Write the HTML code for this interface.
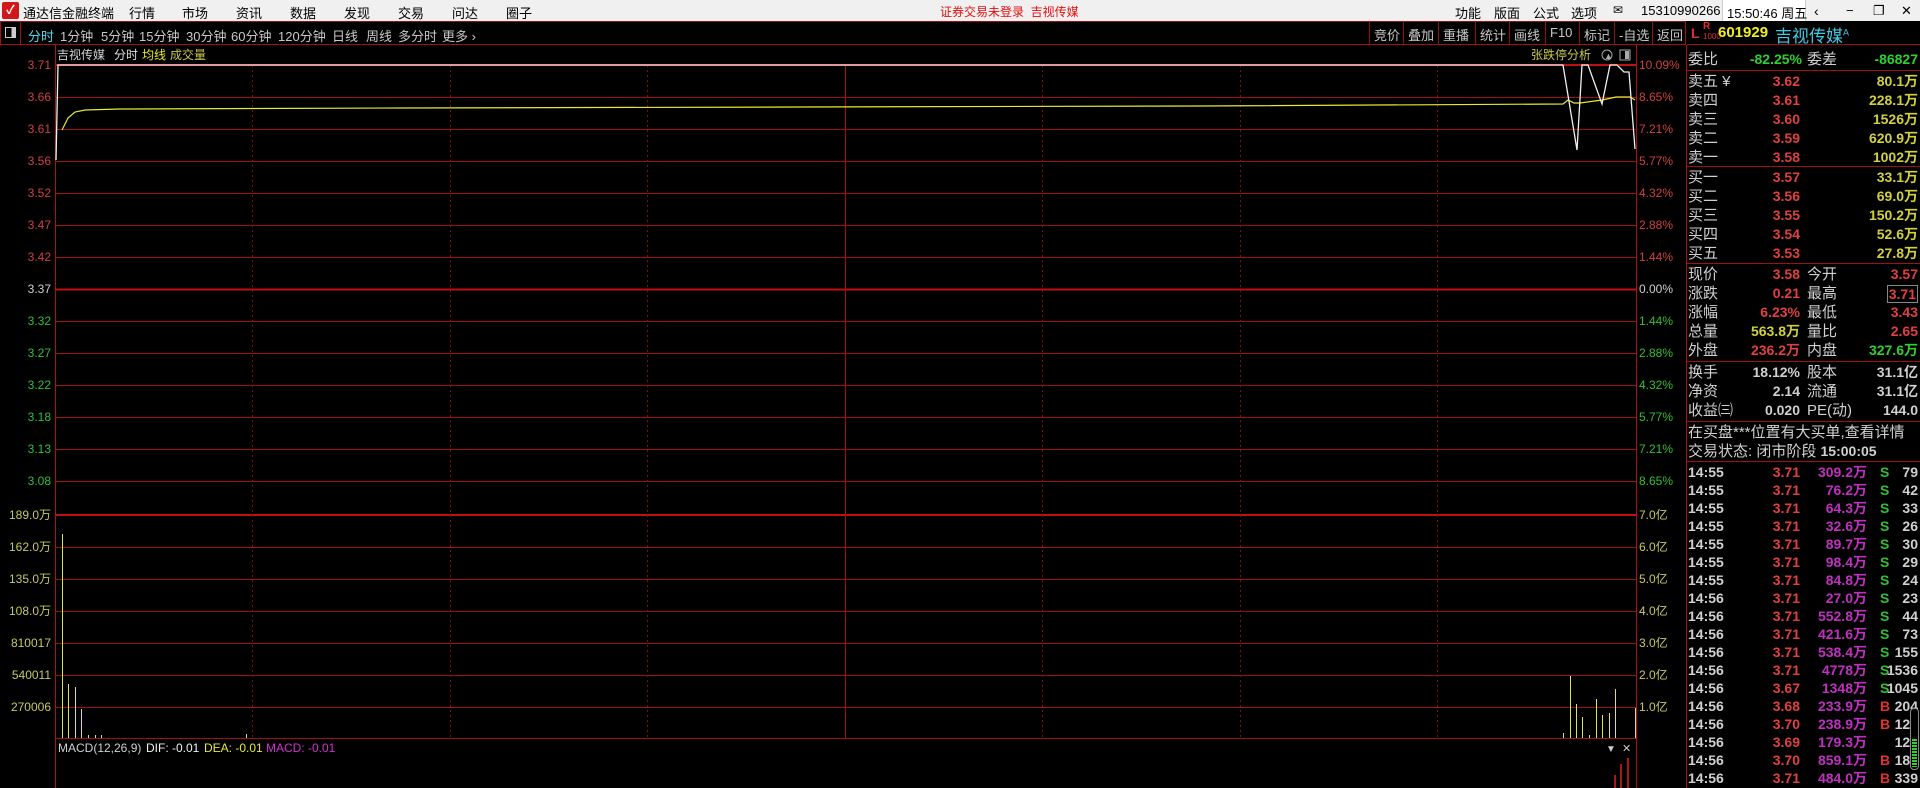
<!DOCTYPE html>
<html><head><meta charset="utf-8"><style>
*{margin:0;padding:0;box-sizing:border-box}
body{width:1920px;height:788px;background:#000;overflow:hidden;font-family:"Liberation Sans","Noto Sans CJK SC",sans-serif;position:relative}
.a{position:absolute;white-space:nowrap}
#title{position:absolute;left:0;top:0;width:1920px;height:21px;background:#f0f0f0;font-size:13px;color:#000}
#title .a{top:3px}
#tb{position:absolute;left:0;top:21px;width:1686px;height:24px;border:1px solid #a01010;background:#000;font-size:13px;color:#c8c8c8}
#tb .a{top:4px}
.btn{position:absolute;top:0;height:22px;border-left:1px solid #901010;padding:3px 4px 0;color:#c8c8c8;font-size:13px;white-space:nowrap}
.rp{position:absolute;left:1687px;width:233px;font-family:"Liberation Sans","Noto Sans CJK SC",sans-serif}
.row{position:absolute;left:0;width:233px;height:19px;font-size:15px;line-height:19px}
.row span{position:absolute;top:0;white-space:nowrap;line-height:19px}
.b{font-weight:bold;font-size:14px}
.hl{position:absolute;left:1687px;width:233px;height:1px;background:#a01010}
.tr{position:absolute;left:0;width:233px;height:18px;font-size:14px;font-weight:bold;line-height:18px}
.tr span{position:absolute;top:0;line-height:18px;white-space:nowrap}
</style></head><body>
<div id="title">
<div class="a" style="left:2px;top:2px;width:17px;height:17px;background:#d01818;border-radius:2px;color:#fff;font-size:12px;text-align:center;line-height:17px;font-weight:bold">✓</div>
<div class="a" style="left:23px">通达信金融终端</div>
<div class="a" style="left:129px">行情</div><div class="a" style="left:182px">市场</div><div class="a" style="left:236px">资讯</div><div class="a" style="left:290px">数据</div><div class="a" style="left:344px">发现</div><div class="a" style="left:398px">交易</div><div class="a" style="left:452px">问达</div><div class="a" style="left:506px">圈子</div>
<div class="a" style="left:940px;color:#e01010;font-size:12px">证券交易未登录&nbsp; 吉视传媒</div>
<div class="a" style="left:1455px">功能</div><div class="a" style="left:1494px">版面</div><div class="a" style="left:1533px">公式</div><div class="a" style="left:1571px">选项</div>
<div class="a" style="left:1613px;font-size:12px">✉</div>
<div class="a" style="left:1641px">15310990266</div>
<div class="a" style="left:1722px;top:0;height:21px;width:84px;background:#fff;border-left:1px solid #ccc;border-right:1px solid #ccc;padding:3px 0 0 4px">15:50:46 周五</div>
<div class="a" style="left:1814px;font-size:14px">‹</div><div class="a" style="left:1846px">−</div><div class="a" style="left:1873px">❐</div><div class="a" style="left:1901px">✕</div>
</div>
<div id="tb">
<div class="a" style="left:0;top:0;width:20px;height:22px;border-right:1px solid #a01010"><div style="margin:5px 4px;width:11px;height:11px;border:1px solid #ccc;background:linear-gradient(90deg,#000 60%,#ccc 60%)"></div></div>
<div class="a" style="left:27px;color:#4ed8e8">分时</div>
<div class="a" style="left:59px">1分钟</div><div class="a" style="left:100px">5分钟</div><div class="a" style="left:138px">15分钟</div><div class="a" style="left:185px">30分钟</div><div class="a" style="left:230px">60分钟</div><div class="a" style="left:277px">120分钟</div><div class="a" style="left:331px">日线</div><div class="a" style="left:365px">周线</div><div class="a" style="left:397px">多分时</div><div class="a" style="left:441px">更多 ›</div>
<div class="btn" style="left:1368px">竞价</div><div class="btn" style="left:1402px">叠加</div><div class="btn" style="left:1437px">重播</div><div class="btn" style="left:1474px">统计</div><div class="btn" style="left:1508px">画线</div><div class="btn" style="left:1544px">F10</div><div class="btn" style="left:1578px">标记</div><div class="btn" style="left:1613px">-自选</div><div class="btn" style="left:1651px">返回</div>
</div>
<svg class="a" style="left:0;top:45px" width="1687" height="743" viewBox="0 45 1687 743" font-family="Liberation Sans, Noto Sans CJK SC, sans-serif">
<line x1="55.5" y1="45" x2="55.5" y2="788" stroke="#b01010"/>
<line x1="1636.5" y1="45" x2="1636.5" y2="788" stroke="#b01010"/>
<line x1="1686.5" y1="21" x2="1686.5" y2="788" stroke="#b01010"/>
<g stroke="#a01010" stroke-width="1">
<line x1="56" y1="97.5" x2="1636" y2="97.5"/><line x1="56" y1="129.5" x2="1636" y2="129.5"/><line x1="56" y1="161.5" x2="1636" y2="161.5"/><line x1="56" y1="193.5" x2="1636" y2="193.5"/><line x1="56" y1="225.5" x2="1636" y2="225.5"/><line x1="56" y1="257.5" x2="1636" y2="257.5"/><line x1="56" y1="289.5" x2="1636" y2="289.5"/><line x1="56" y1="321.5" x2="1636" y2="321.5"/><line x1="56" y1="353.5" x2="1636" y2="353.5"/><line x1="56" y1="385.5" x2="1636" y2="385.5"/><line x1="56" y1="417.5" x2="1636" y2="417.5"/><line x1="56" y1="449.5" x2="1636" y2="449.5"/><line x1="56" y1="481.5" x2="1636" y2="481.5"/>
<line x1="56" y1="547.5" x2="1636" y2="547.5"/><line x1="56" y1="579.5" x2="1636" y2="579.5"/><line x1="56" y1="611.5" x2="1636" y2="611.5"/><line x1="56" y1="643.5" x2="1636" y2="643.5"/><line x1="56" y1="675.5" x2="1636" y2="675.5"/><line x1="56" y1="707.5" x2="1636" y2="707.5"/><line x1="56" y1="738.5" x2="1636" y2="738.5"/>
</g>
<line x1="56" y1="65" x2="1636" y2="65" stroke="#c01010" stroke-width="2"/>
<line x1="56" y1="289.5" x2="1636" y2="289.5" stroke="#c01010" stroke-width="2"/>
<line x1="56" y1="515" x2="1636" y2="515" stroke="#c01010" stroke-width="2"/>
<g stroke="#801010" stroke-dasharray="2,3">
<line x1="252.5" y1="65" x2="252.5" y2="738"/><line x1="450.5" y1="65" x2="450.5" y2="738"/><line x1="647.5" y1="65" x2="647.5" y2="738"/><line x1="1042.5" y1="65" x2="1042.5" y2="738"/><line x1="1240.5" y1="65" x2="1240.5" y2="738"/><line x1="1437.5" y1="65" x2="1437.5" y2="738"/>
</g>
<line x1="845.5" y1="65" x2="845.5" y2="738" stroke="#a01010"/>
<g font-size="12" text-anchor="end">
<g fill="#d04040"><text x="51" y="69">3.71</text><text x="51" y="101">3.66</text><text x="51" y="133">3.61</text><text x="51" y="165">3.56</text><text x="51" y="197">3.52</text><text x="51" y="229">3.47</text><text x="51" y="261">3.42</text></g>
<text x="51" y="293" fill="#d0d0d0">3.37</text>
<g fill="#30c030"><text x="51" y="325">3.32</text><text x="51" y="357">3.27</text><text x="51" y="389">3.22</text><text x="51" y="421">3.18</text><text x="51" y="453">3.13</text><text x="51" y="485">3.08</text></g>
<g fill="#c8c860"><text x="51" y="519">189.0万</text><text x="51" y="551">162.0万</text><text x="51" y="583">135.0万</text><text x="51" y="615">108.0万</text><text x="51" y="647">810017</text><text x="51" y="679">540011</text><text x="51" y="711">270006</text></g>
</g>
<g font-size="12">
<g fill="#d04040"><text x="1639" y="69">10.09%</text><text x="1639" y="101">8.65%</text><text x="1639" y="133">7.21%</text><text x="1639" y="165">5.77%</text><text x="1639" y="197">4.32%</text><text x="1639" y="229">2.88%</text><text x="1639" y="261">1.44%</text></g>
<text x="1639" y="293" fill="#d0d0d0">0.00%</text>
<g fill="#30c030"><text x="1639" y="325">1.44%</text><text x="1639" y="357">2.88%</text><text x="1639" y="389">4.32%</text><text x="1639" y="421">5.77%</text><text x="1639" y="453">7.21%</text><text x="1639" y="485">8.65%</text></g>
<g fill="#c8c860"><text x="1639" y="519">7.0亿</text><text x="1639" y="551">6.0亿</text><text x="1639" y="583">5.0亿</text><text x="1639" y="615">4.0亿</text><text x="1639" y="647">3.0亿</text><text x="1639" y="679">2.0亿</text><text x="1639" y="711">1.0亿</text></g>
</g>
<g font-size="12"><text x="57" y="59" fill="#d0d0d0">吉视传媒</text><text x="114" y="59" fill="#e0e0e0">分时</text><text x="142" y="59" fill="#e8e830">均线</text><text x="170" y="59" fill="#c8c850">成交量</text>
<text x="1531" y="59" fill="#c8c850">张跌停分析</text></g>
<circle cx="1607" cy="55" r="5" fill="none" stroke="#aaa"/><text x="1604" y="59" font-size="9" fill="#aaa">▲</text>
<rect x="1620" y="50" width="10" height="10" fill="none" stroke="#aaa"/><rect x="1625" y="51" width="4" height="8" fill="#aaa"/>
<polyline fill="none" stroke="#e8e830" stroke-width="1.2" points="62,130 68,118 75,112 85,110 120,109 400,108 800,107 1200,106 1563,104 1568,100 1574,103 1580,103 1602,100 1616,97 1630,97 1635,100"/>
<polyline fill="none" stroke="#f0f0f0" stroke-width="1.3" points="56,160 58,65 1563,65 1577,150 1582,65 1588,65 1602,104 1610,65 1617,65 1624,72 1629,72 1635,149"/>
<g stroke="#e0e060" stroke-width="1">
<line x1="62.5" y1="738" x2="62.5" y2="534"/><line x1="68.5" y1="738" x2="68.5" y2="684"/><line x1="75.5" y1="738" x2="75.5" y2="687"/><line x1="81.5" y1="738" x2="81.5" y2="709"/><line x1="88.5" y1="738" x2="88.5" y2="735"/><line x1="95.5" y1="738" x2="95.5" y2="735"/><line x1="101.5" y1="738" x2="101.5" y2="735"/><line x1="246.5" y1="738" x2="246.5" y2="734"/>
<line x1="1570.5" y1="738" x2="1570.5" y2="676"/><line x1="1576.5" y1="738" x2="1576.5" y2="704"/><line x1="1582.5" y1="738" x2="1582.5" y2="717"/><line x1="1563.5" y1="738" x2="1563.5" y2="733"/><line x1="1589.5" y1="738" x2="1589.5" y2="735"/><line x1="1596.5" y1="738" x2="1596.5" y2="699"/><line x1="1602.5" y1="738" x2="1602.5" y2="715"/><line x1="1609.5" y1="738" x2="1609.5" y2="713"/><line x1="1615.5" y1="738" x2="1615.5" y2="689"/><line x1="1635.5" y1="738" x2="1635.5" y2="708"/>
</g>
<line x1="56" y1="738.5" x2="1636" y2="738.5" stroke="#a01010"/>
<g font-size="12"><text x="58" y="752" fill="#d0d0d0">MACD(12,26,9)</text><text x="146" y="752" fill="#f0f0f0">DIF: -0.01</text><text x="204" y="752" fill="#e8e830">DEA: -0.01</text><text x="266" y="752" fill="#d030d0">MACD: -0.01</text></g>
<text x="1606" y="752" font-size="10" fill="#ccc">▼</text><text x="1622" y="752" font-size="11" fill="#ccc">✕</text>
<g stroke="#e02020" stroke-width="1.5"><line x1="1615" y1="788" x2="1615" y2="775"/><line x1="1621" y1="788" x2="1621" y2="764"/><line x1="1628" y1="788" x2="1628" y2="758"/></g>
</svg>
<div class="rp" style="top:21px;height:24px;border-bottom:1px solid #a01010">
<span class="a b" style="left:4px;top:4px;color:#e03030;font-size:14px">L</span>
<span class="a b" style="left:16px;top:1px;color:#e03030;font-size:10px;line-height:10px">R<br><span style="font-size:8px;font-weight:normal">1000</span></span>
<span class="a b" style="left:31px;top:3px;color:#f0f020;font-size:15px">601929</span>
<span class="a" style="left:88px;top:1px;color:#40c8e0;font-size:17px">吉视传媒<sup style="font-size:9px">A</sup></span>
</div>
<div class="rp" style="top:50px;color:#d0d0d0">
<div class="row" style="top:0"><span style="left:1px">委比</span><span class="b" style="right:118px;color:#30d030">-82.25%</span><span style="left:120px">委差</span><span class="b" style="right:2px;color:#30d030">-86827</span></div>
</div>
<div class="hl" style="top:70px"></div>
<div class="rp" style="top:72px;color:#d0d0d0">
<div class="row" style="top:0"><span style="left:1px">卖五 ¥</span><span class="b" style="right:120px;color:#e04040">3.62</span><span class="b" style="right:2px;color:#d0d040">80.1万</span></div>
<div class="row" style="top:19px"><span style="left:1px">卖四</span><span class="b" style="right:120px;color:#e04040">3.61</span><span class="b" style="right:2px;color:#d0d040">228.1万</span></div>
<div class="row" style="top:38px"><span style="left:1px">卖三</span><span class="b" style="right:120px;color:#e04040">3.60</span><span class="b" style="right:2px;color:#d0d040">1526万</span></div>
<div class="row" style="top:57px"><span style="left:1px">卖二</span><span class="b" style="right:120px;color:#e04040">3.59</span><span class="b" style="right:2px;color:#d0d040">620.9万</span></div>
<div class="row" style="top:76px"><span style="left:1px">卖一</span><span class="b" style="right:120px;color:#e04040">3.58</span><span class="b" style="right:2px;color:#d0d040">1002万</span></div>
</div>
<div class="hl" style="top:166px"></div>
<div class="rp" style="top:168px;color:#d0d0d0">
<div class="row" style="top:0"><span style="left:1px">买一</span><span class="b" style="right:120px;color:#e04040">3.57</span><span class="b" style="right:2px;color:#d0d040">33.1万</span></div>
<div class="row" style="top:19px"><span style="left:1px">买二</span><span class="b" style="right:120px;color:#e04040">3.56</span><span class="b" style="right:2px;color:#d0d040">69.0万</span></div>
<div class="row" style="top:38px"><span style="left:1px">买三</span><span class="b" style="right:120px;color:#e04040">3.55</span><span class="b" style="right:2px;color:#d0d040">150.2万</span></div>
<div class="row" style="top:57px"><span style="left:1px">买四</span><span class="b" style="right:120px;color:#e04040">3.54</span><span class="b" style="right:2px;color:#d0d040">52.6万</span></div>
<div class="row" style="top:76px"><span style="left:1px">买五</span><span class="b" style="right:120px;color:#e04040">3.53</span><span class="b" style="right:2px;color:#d0d040">27.8万</span></div>
</div>
<div class="hl" style="top:263px"></div>
<div class="rp" style="top:265px;color:#d0d0d0">
<div class="row" style="top:0"><span style="left:1px">现价</span><span class="b" style="right:120px;color:#e04040">3.58</span><span style="left:120px">今开</span><span class="b" style="right:2px;color:#e04040">3.57</span></div>
<div class="row" style="top:19px"><span style="left:1px">涨跌</span><span class="b" style="right:120px;color:#e04040">0.21</span><span style="left:120px">最高</span><span class="b" style="right:2px;color:#e04040;border:1px solid #888;padding:0 1px;line-height:16px;top:1px">3.71</span></div>
<div class="row" style="top:38px"><span style="left:1px">涨幅</span><span class="b" style="right:120px;color:#e04040">6.23%</span><span style="left:120px">最低</span><span class="b" style="right:2px;color:#e04040">3.43</span></div>
<div class="row" style="top:57px"><span style="left:1px">总量</span><span class="b" style="right:120px;color:#d0d040">563.8万</span><span style="left:120px">量比</span><span class="b" style="right:2px;color:#e04040">2.65</span></div>
<div class="row" style="top:76px"><span style="left:1px">外盘</span><span class="b" style="right:120px;color:#e04040">236.2万</span><span style="left:120px">内盘</span><span class="b" style="right:2px;color:#30d030">327.6万</span></div>
</div>
<div class="hl" style="top:361px"></div>
<div class="rp" style="top:363px;color:#d0d0d0">
<div class="row" style="top:0"><span style="left:1px">换手</span><span class="b" style="right:120px">18.12%</span><span style="left:120px">股本</span><span class="b" style="right:2px">31.1亿</span></div>
<div class="row" style="top:19px"><span style="left:1px">净资</span><span class="b" style="right:120px">2.14</span><span style="left:120px">流通</span><span class="b" style="right:2px">31.1亿</span></div>
<div class="row" style="top:38px"><span style="left:1px">收益㈢</span><span class="b" style="right:120px">0.020</span><span style="left:120px">PE(动)</span><span class="b" style="right:2px">144.0</span></div>
</div>
<div class="hl" style="top:421px"></div>
<div class="rp" style="top:423px;color:#d0d0d0">
<div class="row" style="top:0"><span style="left:1px">在买盘***位置有大买单,查看详情</span></div>
<div class="row" style="top:19px"><span style="left:1px">交易状态: 闭市阶段 <b style="font-size:14px">15:00:05</b></span></div>
</div>
<div class="hl" style="top:461px"></div>
<div class="rp" style="top:463px;color:#d0d0d0">
<div class="tr" style="top:0"><span style="left:1px">14:55</span><span style="right:120px;color:#e04040">3.71</span><span style="right:53px;color:#c030c0">309.2万</span><span style="left:193px;color:#30c030">S</span><span style="right:2px">79</span></div>
<div class="tr" style="top:18px"><span style="left:1px">14:55</span><span style="right:120px;color:#e04040">3.71</span><span style="right:53px;color:#c030c0">76.2万</span><span style="left:193px;color:#30c030">S</span><span style="right:2px">42</span></div>
<div class="tr" style="top:36px"><span style="left:1px">14:55</span><span style="right:120px;color:#e04040">3.71</span><span style="right:53px;color:#c030c0">64.3万</span><span style="left:193px;color:#30c030">S</span><span style="right:2px">33</span></div>
<div class="tr" style="top:54px"><span style="left:1px">14:55</span><span style="right:120px;color:#e04040">3.71</span><span style="right:53px;color:#c030c0">32.6万</span><span style="left:193px;color:#30c030">S</span><span style="right:2px">26</span></div>
<div class="tr" style="top:72px"><span style="left:1px">14:55</span><span style="right:120px;color:#e04040">3.71</span><span style="right:53px;color:#c030c0">89.7万</span><span style="left:193px;color:#30c030">S</span><span style="right:2px">30</span></div>
<div class="tr" style="top:90px"><span style="left:1px">14:55</span><span style="right:120px;color:#e04040">3.71</span><span style="right:53px;color:#c030c0">98.4万</span><span style="left:193px;color:#30c030">S</span><span style="right:2px">29</span></div>
<div class="tr" style="top:108px"><span style="left:1px">14:55</span><span style="right:120px;color:#e04040">3.71</span><span style="right:53px;color:#c030c0">84.8万</span><span style="left:193px;color:#30c030">S</span><span style="right:2px">24</span></div>
<div class="tr" style="top:126px"><span style="left:1px">14:56</span><span style="right:120px;color:#e04040">3.71</span><span style="right:53px;color:#c030c0">27.0万</span><span style="left:193px;color:#30c030">S</span><span style="right:2px">23</span></div>
<div class="tr" style="top:144px"><span style="left:1px">14:56</span><span style="right:120px;color:#e04040">3.71</span><span style="right:53px;color:#c030c0">552.8万</span><span style="left:193px;color:#30c030">S</span><span style="right:2px">44</span></div>
<div class="tr" style="top:162px"><span style="left:1px">14:56</span><span style="right:120px;color:#e04040">3.71</span><span style="right:53px;color:#c030c0">421.6万</span><span style="left:193px;color:#30c030">S</span><span style="right:2px">73</span></div>
<div class="tr" style="top:180px"><span style="left:1px">14:56</span><span style="right:120px;color:#e04040">3.71</span><span style="right:53px;color:#c030c0">538.4万</span><span style="left:193px;color:#30c030">S</span><span style="right:2px">155</span></div>
<div class="tr" style="top:198px"><span style="left:1px">14:56</span><span style="right:120px;color:#e04040">3.71</span><span style="right:53px;color:#c030c0">4778万</span><span style="left:193px;color:#30c030">S</span><span style="right:2px">1536</span></div>
<div class="tr" style="top:216px"><span style="left:1px">14:56</span><span style="right:120px;color:#e04040">3.67</span><span style="right:53px;color:#c030c0">1348万</span><span style="left:193px;color:#30c030">S</span><span style="right:2px">1045</span></div>
<div class="tr" style="top:234px"><span style="left:1px">14:56</span><span style="right:120px;color:#e04040">3.68</span><span style="right:53px;color:#c030c0">233.9万</span><span style="left:193px;color:#e03030">B</span><span style="right:2px">204</span></div>
<div class="tr" style="top:252px"><span style="left:1px">14:56</span><span style="right:120px;color:#e04040">3.70</span><span style="right:53px;color:#c030c0">238.9万</span><span style="left:193px;color:#e03030">B</span><span style="right:2px">122</span></div>
<div class="tr" style="top:270px"><span style="left:1px">14:56</span><span style="right:120px;color:#e04040">3.69</span><span style="right:53px;color:#c030c0">179.3万</span><span style="right:2px">122</span></div>
<div class="tr" style="top:288px"><span style="left:1px">14:56</span><span style="right:120px;color:#e04040">3.70</span><span style="right:53px;color:#c030c0">859.1万</span><span style="left:193px;color:#e03030">B</span><span style="right:2px">188</span></div>
<div class="tr" style="top:306px"><span style="left:1px">14:56</span><span style="right:120px;color:#e04040">3.71</span><span style="right:53px;color:#c030c0">484.0万</span><span style="left:193px;color:#e03030">B</span><span style="right:2px">339</span></div>
</div>
<div class="a" style="left:1910px;top:708px;width:9px;height:62px;border:1px solid #888;border-radius:4px;background:#000"><div style="margin:30px 1px 0;height:28px;background:repeating-linear-gradient(#3c3 0 2px,#000 2px 3px)"></div></div>
</body></html>
